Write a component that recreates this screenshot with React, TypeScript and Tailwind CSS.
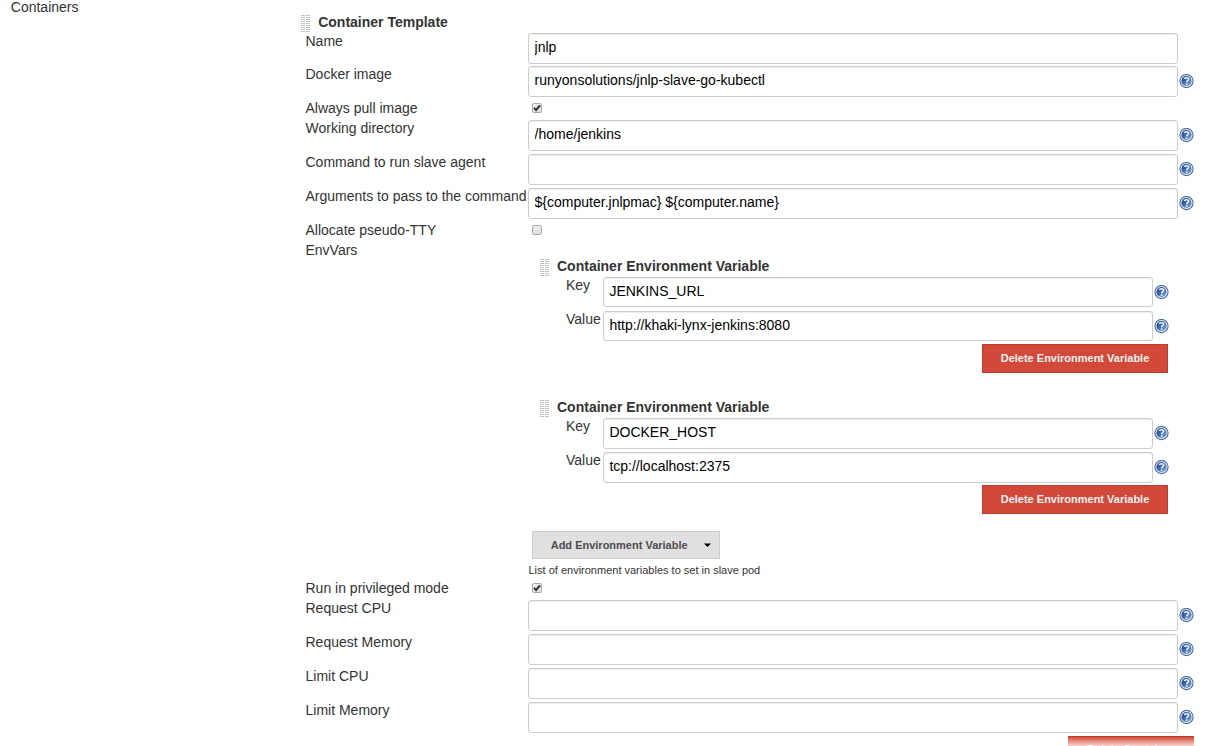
import React from "react";

function HelpIcon({ inset = false }: { inset?: boolean }) {
  return (
    <svg
      className={`mt-[10px] shrink-0 ${inset ? "ml-[0.3px] h-[15px] w-[15px]" : "ml-[0.8px] h-[15px] w-[15px]"}`}
      viewBox="0 0 15 15"
    >
      <defs>
        <linearGradient id="help-fill" x1="0" y1="0" x2="1" y2="1">
          <stop offset="0.2" stopColor="#214d92" />
          <stop offset="1" stopColor="#86abdb" />
        </linearGradient>
      </defs>
      <circle cx="7.5" cy="7" r="6.6" fill="#eef3f9" stroke="#4a6ba2" strokeWidth="1.1" />
      <circle cx="7.5" cy="7" r="5.1" fill="url(#help-fill)" />
      <path
        d="M5.3 5C5.6 3.3 9.6 3.1 9.6 5.3C9.6 6.7 7.7 6.7 7.6 8.4"
        fill="none"
        stroke="#eef3fa"
        strokeWidth="1.5"
      />
      <rect x="6.8" y="9.4" width="1.6" height="1.6" fill="#eef3fa" />
    </svg>
  );
}

function Grip() {
  const rows = Array.from({ length: 9 }, (_, i) => i * 2);
  const columns = [0, 2, 3, 5, 6, 8];
  return (
    <svg className="h-[18px] w-[9px] shrink-0" viewBox="0 0 9 18" shapeRendering="crispEdges">
      {rows.map((y) => (
        <g key={y}>
          <rect x="0" y={y} width="4" height="1" fill="#d0d0d0" />
          <rect x="5" y={y} width="4" height="1" fill="#d0d0d0" />
          {columns.map((x) => (
            <rect key={x} x={x} y={y} width="1" height="1" fill="#bcbcbc" />
          ))}
        </g>
      ))}
    </svg>
  );
}

function TextField({ value = "", short = false }: { value?: string; short?: boolean }) {
  return (
    <input
      type="text"
      defaultValue={value}
      className={`mt-[2px] block min-w-0 flex-1 rounded-[3px] border border-[#ccc] bg-white pt-0 pr-[5.5px] pb-[3px] pl-[5.4px] text-sm text-black shadow-[inset_0_1px_1px_rgba(0,0,0,0.075)] outline-none ${
        short ? "h-[30px]" : "h-[31px]"
      }`}
    />
  );
}

function Checkbox({ checked = false }: { checked?: boolean }) {
  return (
    <svg className="mt-[5px] ml-[3.5px] h-[10px] w-[10px]" viewBox="0 0 10 10">
      <defs>
        <linearGradient id="check-fill" x1="0" y1="0" x2="0" y2="1">
          <stop offset="0" stopColor="#ededed" />
          <stop offset="1" stopColor="#dedede" />
        </linearGradient>
      </defs>
      <rect x="0.5" y="0.5" width="9" height="9" rx="1.2" fill="url(#check-fill)" stroke="#a9a9a9" />
      {checked && <path d="M2 5L4.1 7L8 2.3" fill="none" stroke="#333" strokeWidth="2.1" />}
    </svg>
  );
}

function FieldRow({
  label,
  value,
  help = true,
  first = false,
}: {
  label: string;
  value?: string;
  help?: boolean;
  first?: boolean;
}) {
  return (
    <div className={`flex ${first ? "h-[33px]" : "h-[34px]"}`}>
      <div className="w-[222.7px] shrink-0 leading-5 whitespace-nowrap">{label}</div>
      <div className="flex w-[650px]">
        <TextField value={value} />
      </div>
      {help && <HelpIcon />}
    </div>
  );
}

function CheckRow({ label, checked }: { label: string; checked?: boolean }) {
  return (
    <div className="flex h-5">
      <div className="w-[223px] shrink-0 leading-5">{label}</div>
      <Checkbox checked={checked} />
    </div>
  );
}

function EnvVar({ name, value, short = false }: { name: string; value: string; short?: boolean }) {
  const fields = [
    { label: "Key", text: name },
    { label: "Value", text: value },
  ];
  return (
    <div className={short ? "h-[141px]" : "h-[130px]"}>
      <div className="flex h-[19px] pl-[11.5px]">
        <div className="pt-[3px]">
          <Grip />
        </div>
        <div className="ml-2 leading-5 font-bold">Container Environment Variable</div>
      </div>
      {fields.map((field) => (
        <div key={field.label} className="flex h-[34px] pl-[37.5px]">
          <div className="w-[37px] shrink-0 leading-5">{field.label}</div>
          <div className="flex w-[550.5px] pr-[0.5px]">
            <TextField value={field.text} short={short} />
          </div>
          <HelpIcon inset />
        </div>
      ))}
      <div className="flex w-[639.5px] justify-end pt-px">
        <button className="h-[29px] w-[186px] border border-[#b93c2d] bg-[#d24939] text-[11px] font-bold text-[#f2f2f2]">
          Delete Environment Variable
        </button>
      </div>
    </div>
  );
}

export default function App() {
  return (
    <div className="flex h-[746px] w-[1216px] overflow-hidden bg-white font-['Liberation_Sans',Arial,sans-serif] text-sm text-[#333]">
      <div className="-mt-[3px] w-[295px] shrink-0 pl-[10.8px] leading-5">Containers</div>
      <div className="pt-3 pl-[10.5px]">
        <div className="-ml-[4.5px] flex h-[19px]">
          <div className="pt-[3px]">
            <Grip />
          </div>
          <div className="ml-[8.2px] leading-5 font-bold">Container Template</div>
        </div>
        <FieldRow label="Name" value="jnlp" help={false} first />
        <FieldRow label="Docker image" value="runyonsolutions/jnlp-slave-go-kubectl" />
        <CheckRow label="Always pull image" checked />
        <FieldRow label="Working directory" value="/home/jenkins" />
        <FieldRow label="Command to run slave agent" />
        <FieldRow label="Arguments to pass to the command" value="${computer.jnlpmac} ${computer.name}" />
        <CheckRow label="Allocate pseudo-TTY" />
        <div className="flex h-[338px]">
          <div className="w-[223px] shrink-0 leading-5">EnvVars</div>
          <div className="pt-4">
            <EnvVar name="JENKINS_URL" value="http://khaki-lynx-jenkins:8080" short />
            <EnvVar name="DOCKER_HOST" value="tcp://localhost:2375" />
            <button className="mt-1 ml-[3.5px] flex h-7 w-[188px] items-center border border-[#ccc] bg-[#e0e0e0] pt-px pl-[17.7px] text-[11px] font-bold text-[#4d4d4d]">
              Add Environment Variable
              <svg className="-mt-px ml-[16.5px] h-[4px] w-[7px]" viewBox="0 0 7 4">
                <path d="M0 0.5H7L3.5 4Z" fill="#000" />
              </svg>
            </button>
            <div className="mt-[3px] text-[11px] leading-4">List of environment variables to set in slave pod</div>
          </div>
        </div>
        <CheckRow label="Run in privileged mode" checked />
        <FieldRow label="Request CPU" />
        <FieldRow label="Request Memory" />
        <FieldRow label="Limit CPU" />
        <FieldRow label="Limit Memory" />
        <div className="flex w-[888.5px] justify-end pt-[2px]">
          <div className="h-[10px] w-[126px] overflow-hidden border-t border-[#bf3b2c] bg-linear-to-b from-[#d24939] to-[#f6d5d1] text-center text-[11px] leading-[25px] font-bold text-white">
            Delete Container
          </div>
        </div>
      </div>
    </div>
  );
}
